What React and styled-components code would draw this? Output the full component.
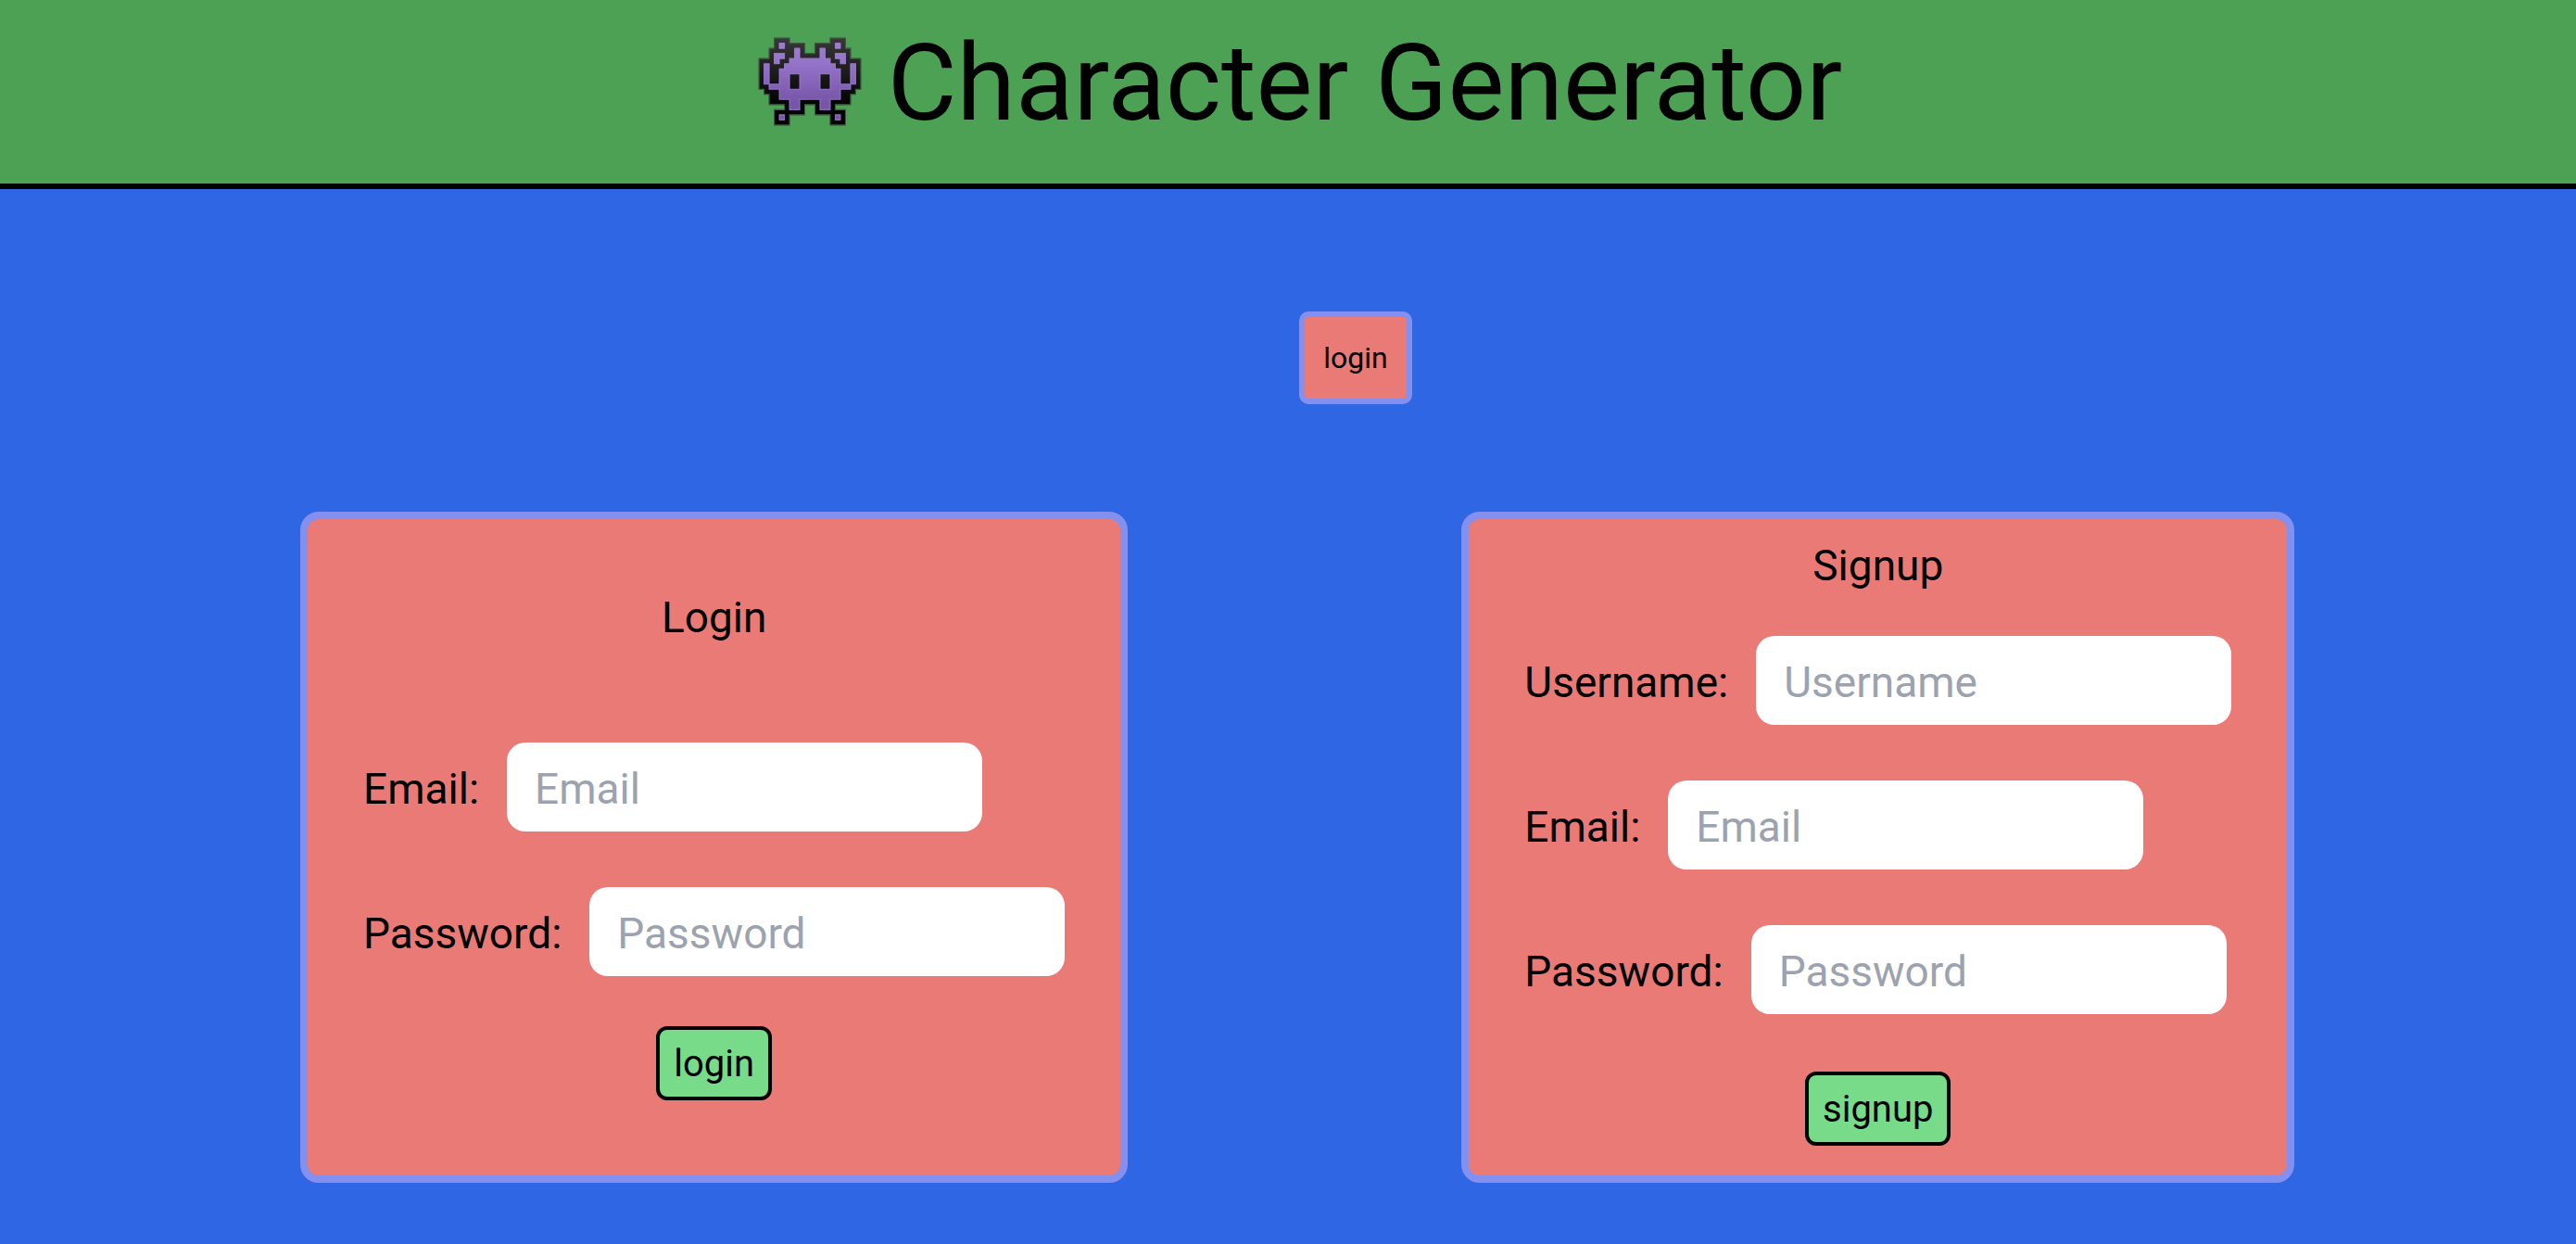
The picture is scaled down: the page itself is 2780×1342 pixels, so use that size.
import React from "react";
import styled, { createGlobalStyle } from "styled-components";

const GlobalStyle = createGlobalStyle`
  *, *::before, *::after { box-sizing: border-box; }
  body {
    margin: 0;
    min-height: 100vh;
    background: #2f66e4;
    color: #000;
    font-family: Roboto, "Liberation Sans", sans-serif;
  }
`;

const Header = styled.header`
  display: flex;
  justify-content: center;
  align-items: flex-start;
  gap: 28px;
  padding: 30px 0 48px 26px;
  background: #4da154;
  border-bottom: 6px solid #000;
`;

const Title = styled.h1`
  margin: 0;
  font-size: 115px;
  font-weight: 400;
  line-height: 120px;
`;

const Monster = styled.svg`
  width: 112px;
  height: 96px;
  margin-top: 10px;
`;

const Main = styled.main`
  display: flex;
  flex-direction: column;
  gap: 116px;
  padding: 132px 300px 66px 324px;
`;

const Nav = styled.nav`
  display: flex;
  justify-content: center;
  padding-left: 122px;
`;

const NavButton = styled.button`
  padding: 20px;
  border: 6px solid #8490ef;
  border-radius: 10px;
  background: #e97a75;
  color: #000;
  font-family: inherit;
  font-size: 32px;
  line-height: 48px;
`;

const Cards = styled.div`
  display: flex;
  gap: 360px;
`;

const Card = styled.form`
  display: flex;
  flex-direction: column;
  padding: ${(p) => p.$top}px 60px 32px;
  border: 8px solid #8490ef;
  border-radius: 20px;
  background: #e97a75;
`;

const CardTitle = styled.h2`
  margin: 0 0 ${(p) => p.$gap}px;
  font-size: 46px;
  font-weight: 400;
  line-height: 72px;
  text-align: center;
`;

const Fields = styled.div`
  display: flex;
  flex-direction: column;
  gap: 60px;
`;

const Field = styled.div`
  display: flex;
  align-items: center;
  gap: 30px;
`;

const Label = styled.label`
  padding-top: 3px;
  font-size: 46px;
  line-height: 72px;
`;

const Input = styled.input`
  width: 513px;
  height: 96px;
  padding: 3px 30px 0;
  border: 0;
  border-radius: 20px;
  background: #fff;
  color: #000;
  font-family: inherit;
  font-size: 46px;
  &::placeholder { color: #9ca3af; opacity: 1; }
`;

const Submit = styled.button`
  align-self: center;
  margin-top: ${(p) => p.$gap}px;
  padding: 7px 15px 5px;
  border: 4px solid #000;
  border-radius: 12px;
  background: #78db8a;
  color: #000;
  font-family: inherit;
  font-size: 40px;
  line-height: 60px;
`;

// "#" is the dark shell, "o" is the purple body, "." is empty.
const sprite = [
  "...###........###...",
  "...#o####..####o#...",
  "..#####o#..#o#####..",
  "..#oo##o####o##oo#..",
  "###o##oooooooo##o###",
  "#o###oooooooooo###o#",
  "#o##oooooooooooo##o#",
  "#o##oo##oooo##oo##o#",
  "#o##oo##oooo##oo##o#",
  "##oooo##oooo##oooo##",
  ".###oooooooooooo###.",
  "..##oooooooooooo##..",
  "..####oo####oo####..",
  ".....#oo#..#oo#.....",
  "...######..######...",
  "...#o#........#o#...",
  "...###........###...",
];

const at = (x, y) => (sprite[y] && sprite[y][x]) || ".";

function fillPath(test) {
  let d = "";
  sprite.forEach((row, y) =>
    [...row].forEach((c, x) => {
      if (test(c)) d += `M${x} ${y}h1v1h-1z`;
    })
  );
  return d;
}

function edgePath(test) {
  let d = "";
  sprite.forEach((row, y) =>
    [...row].forEach((c, x) => {
      if (!test(c)) return;
      if (!test(at(x, y - 1))) d += `M${x} ${y}h1`;
      if (!test(at(x, y + 1))) d += `M${x} ${y + 1}h1`;
      if (!test(at(x - 1, y))) d += `M${x} ${y}v1`;
      if (!test(at(x + 1, y))) d += `M${x + 1} ${y}v1`;
    })
  );
  return d;
}

const solid = (c) => c !== ".";
const body = (c) => c === "o";

function MonsterIcon() {
  return (
    <Monster viewBox="-0.2 -0.2 20.4 17.4" preserveAspectRatio="none" role="img" aria-label="Alien monster">
      <defs>
        <linearGradient id="shell" gradientUnits="userSpaceOnUse" x1="0" y1="0" x2="0" y2="17">
          <stop offset="0" stopColor="#383838" />
          <stop offset="0.7" stopColor="#060606" />
          <stop offset="1" stopColor="#000" />
        </linearGradient>
        <linearGradient id="body" gradientUnits="userSpaceOnUse" x1="0" y1="0" x2="0" y2="17">
          <stop offset="0" stopColor="#a080d4" />
          <stop offset="0.3" stopColor="#9373c8" />
          <stop offset="0.75" stopColor="#7654a8" />
          <stop offset="1" stopColor="#7a58ae" />
        </linearGradient>
      </defs>
      <path d={fillPath(solid)} fill="url(#shell)" stroke="url(#shell)" strokeWidth="0.06" />
      <path d={edgePath(solid)} fill="none" stroke="#3f5a41" strokeWidth="0.2" strokeLinecap="square" />
      <path d={fillPath(body)} fill="url(#body)" stroke="url(#body)" strokeWidth="0.06" />
      <path d={edgePath(body)} fill="none" stroke="#a284d6" strokeOpacity="0.7" strokeWidth="0.2" strokeLinecap="square" />
    </Monster>
  );
}

function AuthCard({ id, title, fields, action, top, titleGap, actionGap }) {
  return (
    <Card $top={top} onSubmit={(e) => e.preventDefault()}>
      <CardTitle $gap={titleGap}>{title}</CardTitle>
      <Fields>
        {fields.map(({ name, type }) => (
          <Field key={name}>
            <Label htmlFor={`${id}-${name}`}>{name}:</Label>
            <Input id={`${id}-${name}`} type={type} placeholder={name} />
          </Field>
        ))}
      </Fields>
      <Submit type="submit" $gap={actionGap}>{action}</Submit>
    </Card>
  );
}

const username = { name: "Username", type: "text" };
const email = { name: "Email", type: "email" };
const password = { name: "Password", type: "password" };

export default function App() {
  return (
    <>
      <GlobalStyle />
      <Header>
        <MonsterIcon />
        <Title>Character Generator</Title>
      </Header>
      <Main>
        <Nav>
          <NavButton type="button">login</NavButton>
        </Nav>
        <Cards>
          <AuthCard id="login" title="Login" fields={[email, password]} action="login" top={70} titleGap={99} actionGap={54} />
          <AuthCard id="signup" title="Signup" fields={[username, email, password]} action="signup" top={14} titleGap={40} actionGap={62} />
        </Cards>
      </Main>
    </>
  );
}
